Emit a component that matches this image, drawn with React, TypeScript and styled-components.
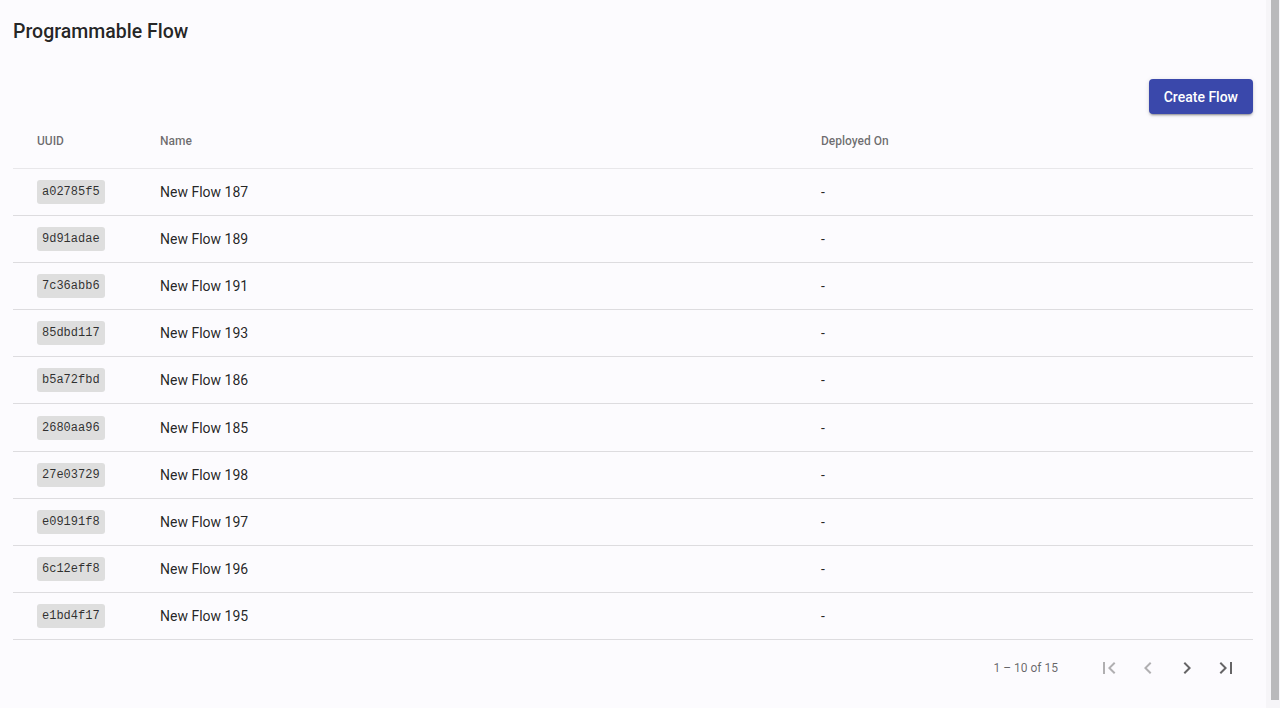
import React from 'react';
import styled, { createGlobalStyle } from 'styled-components';

const GlobalStyle = createGlobalStyle`
  body {
    margin: 0;
    background: #fcfbfe;
    font-family: Roboto, "Helvetica Neue", sans-serif;
    color: rgba(0, 0, 0, 0.87);
    overflow: hidden;
  }
`;

const Viewport = styled.div`
  display: flex;
  height: 708px;
`;

const Page = styled.div`
  flex: 1;
  min-width: 0;
  padding: 14px 13px 20px;
`;

// stand-in for the browser scrollbar seen in the screenshot
const ScrollTrack = styled.div`
  width: 14px;
  flex-shrink: 0;
  background: #f6f5f8;
  display: flex;
  padding: 0 1px 8px 5px;
  box-sizing: border-box;
`;

const ScrollThumb = styled.div`
  flex: 1;
  background: #b9b9bb;
`;

const Title = styled.h1`
  margin: 0;
  height: 36px;
  line-height: 36px;
  font-size: 19.5px;
  font-weight: 500;
  color: rgba(0, 0, 0, 0.87);
`;

const Toolbar = styled.div`
  display: flex;
  justify-content: flex-end;
  margin-top: 29px;
`;

const PrimaryButton = styled.button`
  height: 35px;
  padding: 0 15px;
  border: none;
  border-radius: 4px;
  background: #3a48ab;
  color: #fff;
  font-family: Roboto, sans-serif;
  font-size: 14px;
  font-weight: 500;
  box-shadow: 0 3px 1px -2px rgba(0, 0, 0, 0.2), 0 2px 2px 0 rgba(0, 0, 0, 0.14),
    0 1px 5px 0 rgba(0, 0, 0, 0.12);
  cursor: pointer;
`;

const Table = styled.div`
  display: grid;
  grid-template-columns: 147px 661px 1fr;
`;

const HeaderCell = styled.div<{ first?: boolean }>`
  height: 54px;
  display: flex;
  align-items: center;
  padding-left: ${(p) => (p.first ? '24px' : '0')};
  font-size: 12px;
  font-weight: 500;
  color: rgba(0, 0, 0, 0.58);
  border-bottom: 1px solid rgba(0, 0, 0, 0.08);
`;

const Cell = styled.div<{ first?: boolean }>`
  height: 46.1px;
  display: flex;
  align-items: center;
  padding-left: ${(p) => (p.first ? '24px' : '0')};
  font-size: 14px;
  color: rgba(0, 0, 0, 0.87);
  border-bottom: 1px solid rgba(0, 0, 0, 0.12);
`;

const Chip = styled.code`
  display: inline-flex;
  align-items: center;
  height: 24px;
  padding: 0 5px;
  border-radius: 3px;
  background: #dedede;
  font-family: "Liberation Mono", "Courier New", monospace;
  font-size: 12px;
  color: rgba(0, 0, 0, 0.8);
`;

const Paginator = styled.div`
  display: flex;
  align-items: center;
  justify-content: flex-end;
  height: 56px;
  padding-right: 8px;
`;

const RangeLabel = styled.span`
  font-size: 12px;
  color: rgba(0, 0, 0, 0.6);
  margin-right: 31px;
`;

const PageButton = styled.button<{ disabled?: boolean }>`
  width: 39px;
  height: 40px;
  padding: 0;
  border: none;
  background: transparent;
  display: flex;
  align-items: center;
  justify-content: center;
  color: ${(p) => (p.disabled ? 'rgba(0,0,0,0.3)' : 'rgba(0,0,0,0.6)')};
  cursor: ${(p) => (p.disabled ? 'default' : 'pointer')};
`;

const Icon = ({ d }: { d: string }) => (
  <svg width="24" height="24" viewBox="0 0 24 24" fill="currentColor">
    <path d={d} />
  </svg>
);

const flows = [
  { uuid: 'a02785f5', name: 'New Flow 187' },
  { uuid: '9d91adae', name: 'New Flow 189' },
  { uuid: '7c36abb6', name: 'New Flow 191' },
  { uuid: '85dbd117', name: 'New Flow 193' },
  { uuid: 'b5a72fbd', name: 'New Flow 186' },
  { uuid: '2680aa96', name: 'New Flow 185' },
  { uuid: '27e03729', name: 'New Flow 198' },
  { uuid: 'e09191f8', name: 'New Flow 197' },
  { uuid: '6c12eff8', name: 'New Flow 196' },
  { uuid: 'e1bd4f17', name: 'New Flow 195' },
];

const App = () => {
  return (
    <>
      <GlobalStyle />
      <Viewport>
        <Page>
          <Title>Programmable Flow</Title>
          <Toolbar>
            <PrimaryButton>Create Flow</PrimaryButton>
          </Toolbar>
          <Table>
            <HeaderCell first>UUID</HeaderCell>
            <HeaderCell>Name</HeaderCell>
            <HeaderCell>Deployed On</HeaderCell>
            {flows.map((flow) => (
              <React.Fragment key={flow.uuid}>
                <Cell first>
                  <Chip>{flow.uuid}</Chip>
                </Cell>
                <Cell>{flow.name}</Cell>
                <Cell>-</Cell>
              </React.Fragment>
            ))}
          </Table>
          <Paginator>
            <RangeLabel>1 – 10 of 15</RangeLabel>
            <PageButton disabled>
              <Icon d="M18.41 16.59L13.82 12l4.59-4.59L17 6l-6 6 6 6zM6 6h2v12H6z" />
            </PageButton>
            <PageButton disabled>
              <Icon d="M15.41 7.41L14 6l-6 6 6 6 1.41-1.41L10.83 12z" />
            </PageButton>
            <PageButton>
              <Icon d="M10 6L8.59 7.41 13.17 12l-4.58 4.59L10 18l6-6z" />
            </PageButton>
            <PageButton>
              <Icon d="M5.59 7.41L10.18 12l-4.59 4.59L7 18l6-6-6-6zM16 6h2v12h-2z" />
            </PageButton>
          </Paginator>
        </Page>
        <ScrollTrack>
          <ScrollThumb />
        </ScrollTrack>
      </Viewport>
    </>
  );
};

export default App;
